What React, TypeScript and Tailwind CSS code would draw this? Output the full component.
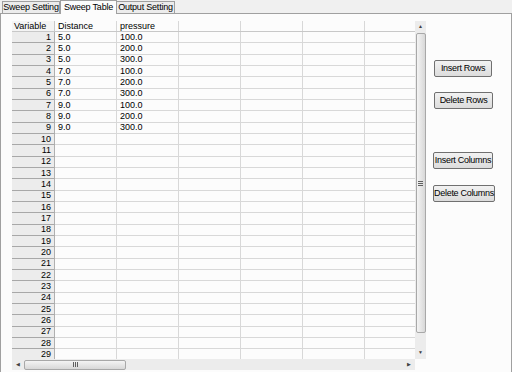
import React from "react";

const data: [string, string][] = [
  ["5.0", "100.0"],
  ["5.0", "200.0"],
  ["5.0", "300.0"],
  ["7.0", "100.0"],
  ["7.0", "200.0"],
  ["7.0", "300.0"],
  ["9.0", "100.0"],
  ["9.0", "200.0"],
  ["9.0", "300.0"],
];

const rows = Array.from({ length: 29 }, (_, i) => i + 1);

function Btn({ label, w }: { label: string; w: string }) {
  return (
    <div
      className={`h-[17px] ${w} flex items-center justify-center whitespace-nowrap rounded-[2px] border border-[#707070] bg-gradient-to-b from-[#f2f2f2] to-[#dcdcdc] text-[9px] tracking-[-0.3px] text-black`}
    >
      {label}
    </div>
  );
}

export default function App() {
  return (
    <div
      className="w-[512px] h-[372px] bg-[#f0f0f0] overflow-hidden relative"
      style={{ fontFamily: "'Liberation Sans', Arial, sans-serif" }}
    >
      {/* tab strip */}
      <div className="h-[13px] flex items-end pl-[2px] text-[9px] leading-none whitespace-nowrap tracking-[-0.2px]">
        <div className="h-[12px] w-[58px] border border-b-0 border-[#a0a0a0] bg-[#ececec] flex items-center justify-center">
          Sweep Setting
        </div>
        <div className="h-[14px] w-[57px] -mb-[1px] border border-b-0 border-[#a0a0a0] bg-[#fcfcfc] flex items-center justify-center relative z-10 -mt-[1px]">
          Sweep Table
        </div>
        <div className="h-[12px] w-[58px] border border-b-0 border-l-0 border-[#a0a0a0] bg-[#ececec] flex items-center justify-center">
          Output Setting
        </div>
      </div>
      {/* panel */}
      <div className="h-[359px] border-t border-l border-r border-[#a0a0a0] bg-[#fcfcfc] flex">
        <div className="pl-[11px] pt-[7px] flex flex-col">
          <div className="flex">
            {/* grid */}
            <div className="w-[403px] h-[338px] overflow-hidden text-[9px] leading-none whitespace-nowrap">
              <div className="flex h-[11px] border-b border-[#c8c8c8]">
                <div className="w-[43px] border-r border-[#c8c8c8] bg-[#f4f4f4] pl-[2px] flex items-center">
                  Variable
                </div>
                <div className="w-[62px] border-r border-[#d8d8d8] pl-[3px] flex items-center">
                  Distance
                </div>
                <div className="w-[62px] border-r border-[#d8d8d8] pl-[3px] flex items-center">
                  pressure
                </div>
                <div className="w-[62px] border-r border-[#d8d8d8]" />
                <div className="w-[62px] border-r border-[#d8d8d8]" />
                <div className="w-[62px] border-r border-[#d8d8d8]" />
                <div className="w-[50px]" />
              </div>
              {rows.map((r) => {
                const d = data[r - 1];
                return (
                  <div key={r} className="flex h-[11.33px]">
                    <div className="w-[43px] border-r border-[#b0b0b0] border-b border-b-[#a8a8a8] bg-[#ececec] pr-[3px] flex items-center justify-end">
                      {r}
                    </div>
                    <div className="w-[62px] border-r border-b border-[#d8d8d8] pl-[3px] flex items-center">
                      {d ? d[0] : ""}
                    </div>
                    <div className="w-[62px] border-r border-b border-[#d8d8d8] pl-[3px] flex items-center">
                      {d ? d[1] : ""}
                    </div>
                    <div className="w-[62px] border-r border-b border-[#d8d8d8]" />
                    <div className="w-[62px] border-r border-b border-[#d8d8d8]" />
                    <div className="w-[62px] border-r border-b border-[#d8d8d8]" />
                    <div className="w-[50px] border-b border-[#d8d8d8]" />
                  </div>
                );
              })}
            </div>
            {/* vertical scrollbar */}
            <div className="w-[11px] h-[338px] bg-[#ececec] flex flex-col items-center">
              <div className="h-[12px] w-full flex items-center justify-center text-[5px] text-[#404040]">▲</div>
              <div className="w-[10px] h-[300px] rounded-[2px] border border-[#a8a8a8] bg-gradient-to-r from-[#f4f4f4] to-[#d8d8d8] flex items-center justify-center">
                <div className="flex flex-col gap-[1px]">
                  <div className="w-[5px] h-[1px] bg-[#606060]" />
                  <div className="w-[5px] h-[1px] bg-[#606060]" />
                  <div className="w-[5px] h-[1px] bg-[#606060]" />
                </div>
              </div>
              <div className="flex-1" />
              <div className="h-[12px] w-full flex items-center justify-center text-[5px] text-[#404040]">▼</div>
            </div>
          </div>
          {/* horizontal scrollbar */}
          <div className="w-[403px] h-[11px] bg-[#ececec] flex items-center">
            <div className="w-[12px] h-full flex items-center justify-center text-[5px] text-[#404040]">◀</div>
            <div className="w-[102px] h-[10px] rounded-[2px] border border-[#a8a8a8] bg-gradient-to-b from-[#f4f4f4] to-[#d8d8d8] flex items-center justify-center">
              <div className="flex gap-[1px]">
                <div className="w-[1px] h-[5px] bg-[#606060]" />
                <div className="w-[1px] h-[5px] bg-[#606060]" />
                <div className="w-[1px] h-[5px] bg-[#606060]" />
              </div>
            </div>
            <div className="flex-1" />
            <div className="w-[12px] h-full flex items-center justify-center text-[5px] text-[#404040]">▶</div>
          </div>
        </div>
        {/* buttons */}
        <div className="flex flex-col items-start pt-[46px] pl-[7px]">
          <div className="ml-[1px]"><Btn label="Insert Rows" w="w-[58px]" /></div>
          <div className="mt-[15px] ml-[1px]"><Btn label="Delete Rows" w="w-[59px]" /></div>
          <div className="mt-[43px]"><Btn label="Insert Columns" w="w-[60px]" /></div>
          <div className="mt-[16px]"><Btn label="Delete Columns" w="w-[62px]" /></div>
        </div>
      </div>
    </div>
  );
}
